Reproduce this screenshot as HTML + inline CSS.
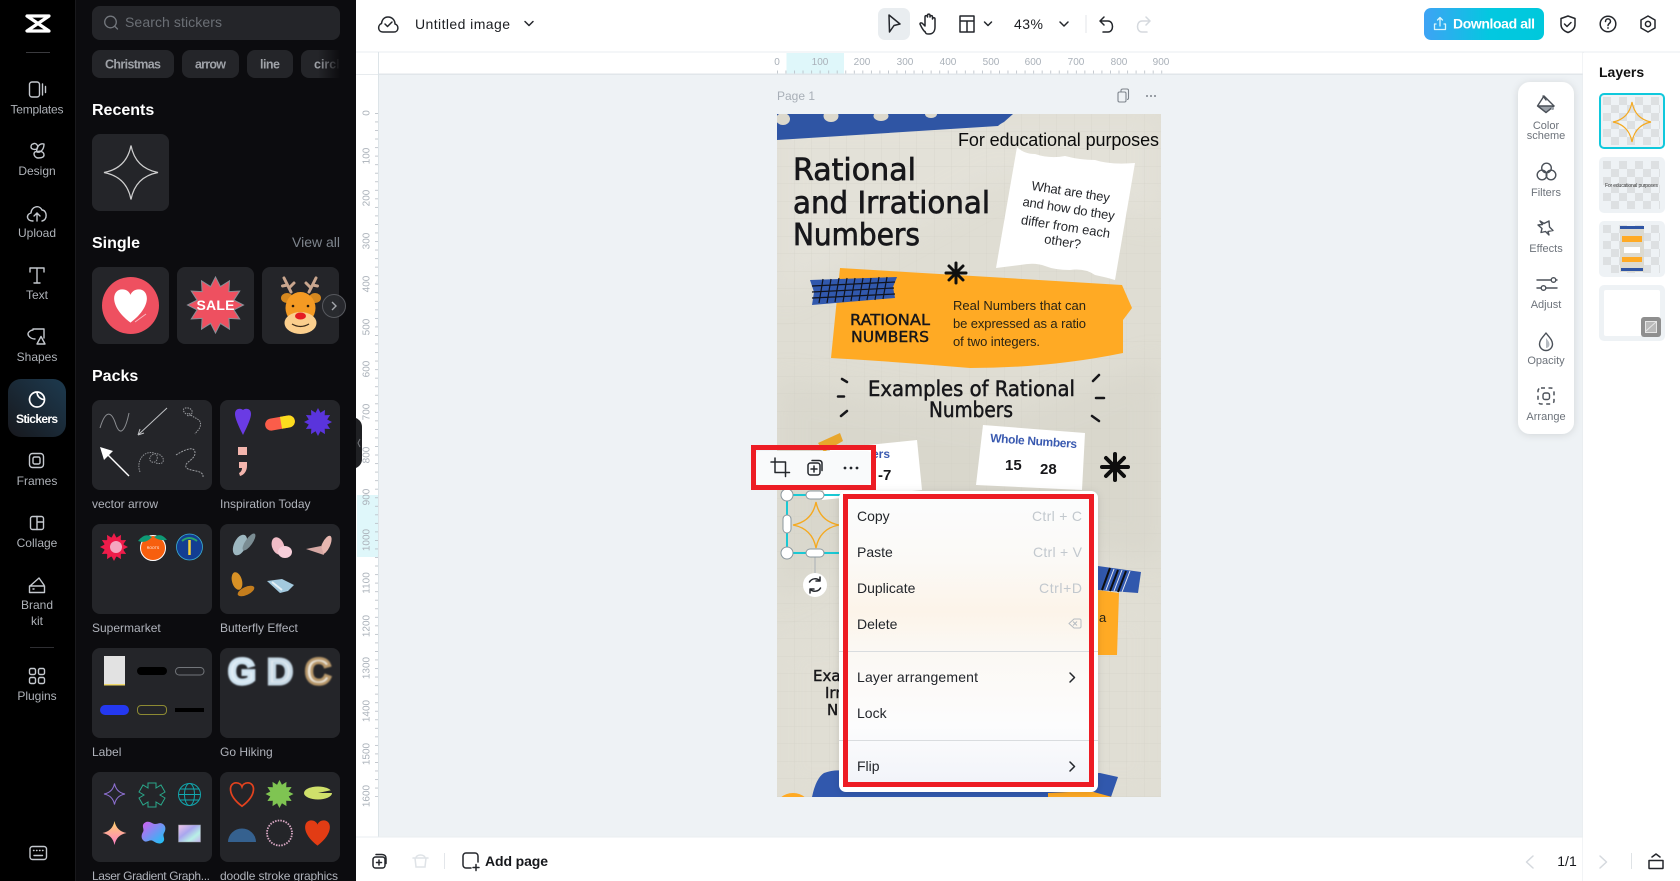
<!DOCTYPE html>
<html lang="en"><head><meta charset="utf-8"><title>Untitled image</title>
<style>
html,body{margin:0;padding:0;width:1680px;height:881px;overflow:hidden;background:#fff}
svg{display:block;position:absolute;left:0;top:0}
text{font-family:"Liberation Sans","DejaVu Sans",sans-serif}
.rl{font-size:12px;fill:#aeb2b8;text-anchor:middle}
.h{font-size:16px;font-weight:700;fill:#fff}
.p{font-size:12px;fill:#b0b3bb}
.c{font-size:12.5px;font-weight:700;fill:#9fa2a8}
.ru{font-size:10px;fill:#aab1b9;text-anchor:middle}
.tl{font-size:11px;fill:#6d737b;text-anchor:middle}
.m{font-size:14px;fill:#23262b}
.s{font-size:14px;fill:#c2c8ce;text-anchor:end}
.hw{font-family:"DejaVu Sans",sans-serif;fill:#17171a;stroke:#17171a;stroke-width:.7}
.ic{fill:none;stroke:#c4c8ce;stroke-width:1.4;stroke-linecap:round;stroke-linejoin:round}
.ti{fill:none;stroke:#24272c;stroke-width:1.5;stroke-linecap:round;stroke-linejoin:round}
.tg{fill:none;stroke:#4b5159;stroke-width:1.4;stroke-linecap:round;stroke-linejoin:round}
.t{fill:#242529}
</style></head><body>
<svg width="1680" height="881" viewBox="0 0 1680 881" xmlns="http://www.w3.org/2000/svg">
<defs>
<path id="star" d="M0-10Q1.6-1.6 10 0Q1.6 1.6 0 10Q-1.6 1.6-10 0Q-1.6-1.6 0-10Z"/>
<path id="heart" d="M0 9C-12 0-10-9-4.5-9C-2-9-.5-7.5 0-6C.5-7.5 2-9 4.5-9C10-9 12 0 0 9Z"/>
<polygon id="burst" points="28,0 18.4,4.9 24.2,14 13.4,13.4 14,24.2 4.9,18.4 0,28 -4.9,18.4 -14,24.2 -13.4,13.4 -24.2,14 -18.4,4.9 -28,0 -18.4,-4.9 -24.2,-14 -13.4,-13.4 -14,-24.2 -4.9,-18.4 0,-28 4.9,-18.4 14,-24.2 13.4,-13.4 24.2,-14 18.4,-4.9"/>
<pattern id="gridp" x="777" y="114" width="17.5" height="17.5" patternUnits="userSpaceOnUse"><path d="M17.5 0V17.5H0" fill="none" stroke="#d0cec4" stroke-width=".5"/></pattern>
<pattern id="rh" x="777" y="0" width="8.54" height="881" patternUnits="userSpaceOnUse"><rect x="0" y="70.5" width=".8" height="3" fill="#b6bcc4"/></pattern>
<pattern id="rv" x="0" y="113" width="881" height="8.54" patternUnits="userSpaceOnUse"><rect x="375" y="0" width="3" height=".8" fill="#b6bcc4"/></pattern>
<pattern id="chk" x="1603" y="97" width="16" height="16" patternUnits="userSpaceOnUse"><rect width="16" height="16" fill="#eef2f5"/><rect width="8" height="8" fill="#dde0e2"/><rect x="8" y="8" width="8" height="8" fill="#dde0e2"/></pattern>
<linearGradient id="dl" x1="0" x2="1"><stop offset="0" stop-color="#3ea3f4"/><stop offset=".55" stop-color="#03c8e0"/><stop offset="1" stop-color="#00c8dc"/></linearGradient>
<linearGradient id="act" x1="1" y1="0" x2="0" y2="1"><stop offset="0" stop-color="#1d3a4f"/><stop offset="1" stop-color="#17181d"/></linearGradient>
<linearGradient id="menu" x1="0" y1="0" x2="0" y2="1"><stop offset="0" stop-color="#fbfcfd"/><stop offset=".22" stop-color="#fbf9f6"/><stop offset=".4" stop-color="#fcf4e9"/><stop offset=".52" stop-color="#fbf8f3"/><stop offset=".8" stop-color="#fcfcfd"/><stop offset="1" stop-color="#f2f4f9"/></linearGradient>
<linearGradient id="fade" x1="0" x2="1"><stop offset="0" stop-color="#0c0c0f" stop-opacity="0"/><stop offset="1" stop-color="#0c0c0f"/></linearGradient>
<linearGradient id="gs" x1="0" y1="0" x2="0" y2="1"><stop offset="0" stop-color="#ffd36a"/><stop offset="1" stop-color="#ff7fc8"/></linearGradient>
<linearGradient id="gb" x1="0" y1="0" x2="1" y2="1"><stop offset="0" stop-color="#d85cf0"/><stop offset="1" stop-color="#12c8f5"/></linearGradient>
<linearGradient id="gh" x1="0" y1="0" x2="1" y2="1"><stop offset="0" stop-color="#f2c6e8"/><stop offset=".4" stop-color="#a9a6ee"/><stop offset=".7" stop-color="#b8f0e6"/><stop offset="1" stop-color="#c8b2f0"/></linearGradient>
<filter id="sh" x="-20%" y="-20%" width="140%" height="140%"><feDropShadow dx="0" dy="1" stdDeviation="4" flood-color="#000" flood-opacity=".12"/></filter>
<filter id="bl" x="-20%" y="-20%" width="140%" height="140%"><feGaussianBlur stdDeviation="14"/></filter>
<filter id="bs" x="-20%" y="-20%" width="140%" height="140%"><feGaussianBlur stdDeviation=".7"/></filter>
<clipPath id="pg"><rect x="777" y="114" width="384" height="683"/></clipPath>
<clipPath id="pn"><rect x="76" y="0" width="280" height="881"/></clipPath>
</defs>

<!-- canvas background and bars -->
<rect x="356" y="0" width="1324" height="881" fill="#fff"/>
<rect x="378" y="75" width="1205" height="762" fill="#eef2f5"/>
<rect x="356" y="51.5" width="1324" height="1" fill="#e9edf0"/>
<rect x="378" y="73.5" width="1205" height="1.5" fill="#e1e6ea"/>
<rect x="356" y="74" width="22" height=".8" fill="#e1e6ea"/>
<rect x="378" y="52" width="1" height="785" fill="#dde4e8"/>
<rect x="1582.5" y="52" width="1" height="829" fill="#e6eaed"/>
<rect x="356" y="836.5" width="1324" height="1" fill="#e9edf0"/>
<rect x="1583" y="53" width="97" height="828" fill="#fff"/>

<!-- rulers -->
<rect x="786.5" y="53" width="57.5" height="20.5" fill="#dff7fa"/>
<rect x="357" y="495" width="21" height="62" fill="#dff7fa"/>
<rect x="777" y="52" width="390" height="22" fill="url(#rh)"/>
<rect x="356" y="113" width="22" height="684" fill="url(#rv)"/>
<g class="ru">
<text class="ru" x="777" y="65">0</text><text class="ru" x="820" y="65">100</text><text class="ru" x="862" y="65">200</text><text class="ru" x="905" y="65">300</text><text class="ru" x="948" y="65">400</text><text class="ru" x="991" y="65">500</text><text class="ru" x="1033" y="65">600</text><text class="ru" x="1076" y="65">700</text><text class="ru" x="1119" y="65">800</text><text class="ru" x="1161" y="65">900</text>
<text class="ru" transform="translate(369.500 113) rotate(-90)">0</text><text class="ru" transform="translate(369.500 156) rotate(-90)">100</text><text class="ru" transform="translate(369.500 198) rotate(-90)">200</text><text class="ru" transform="translate(369.500 241) rotate(-90)">300</text><text class="ru" transform="translate(369.500 284) rotate(-90)">400</text><text class="ru" transform="translate(369.500 327) rotate(-90)">500</text><text class="ru" transform="translate(369.500 369) rotate(-90)">600</text><text class="ru" transform="translate(369.500 412) rotate(-90)">700</text><text class="ru" transform="translate(369.500 455) rotate(-90)">800</text><text class="ru" transform="translate(369.500 497) rotate(-90)">900</text><text class="ru" transform="translate(369.500 540) rotate(-90)">1000</text><text class="ru" transform="translate(369.500 583) rotate(-90)">1100</text><text class="ru" transform="translate(369.500 626) rotate(-90)">1200</text><text class="ru" transform="translate(369.500 668) rotate(-90)">1300</text><text class="ru" transform="translate(369.500 711) rotate(-90)">1400</text><text class="ru" transform="translate(369.500 754) rotate(-90)">1500</text><text class="ru" transform="translate(369.500 796) rotate(-90)">1600</text>
</g>

<!-- top bar -->
<g class="ti"><path d="M383 32h11c5 0 5-7 1-8c0-4-3-7-7-7s-6 3-6.500 6.500c-4 1.500-4 8.500 1.500 8.500Z"/><path d="M385 24l2.500 2.500l4.500-4.500"/></g>
<text x="415" y="29" font-size="14" fill="#1c1e22" textLength="95">Untitled image</text>
<path class="ti" d="M525 21.500l4 4l4-4"/>
<rect x="878" y="8" width="32" height="32" rx="7" fill="#e9edf0"/>
<path class="ti" d="M889 15l11 9l-6 1.500l-4.500 6.500Z"/>
<path class="ti" d="M925 32c-3-3-4-6-5-8c0-1.500 2-1.500 3 0l2 2v-9c0-1.800 2.500-1.800 2.500 0v-1.500c0-1.800 2.500-1.800 2.500 0v1.500c0-1.800 2.500-1.800 2.500 0v2c0-1.600 2.500-1.600 2.500 0v8c0 4-2 7-6 7s-3-1-4-2.500Z"/>
<path class="ti" d="M960 16h14v16h-14ZM960 21h14M967 21v11"/>
<path class="ti" d="M984.500 22l3.500 3.500l3.500-3.500"/>
<text x="1014" y="29" font-size="14" fill="#1c1e22" textLength="29">43%</text>
<path class="ti" d="M1060 22l4 4l4-4"/>
<rect x="1085.500" y="15" width="1" height="18" fill="#e3e6ea"/>
<path class="ti" d="M1104 17l-4 4l4 4M1100 21h8c6 0 6 11 0 11h-5"/>
<path d="M1146 17l4 4l-4 4M1150 21h-8c-6 0-6 11 0 11h5" fill="none" stroke="#d5d9de" stroke-width="1.500" stroke-linecap="round" stroke-linejoin="round"/>
<rect x="1424" y="8" width="120" height="32" rx="7" fill="url(#dl)"/>
<g fill="none" stroke="#d8f4fb" stroke-width="1.300" stroke-linecap="round" stroke-linejoin="round"><path d="M1436 24h-1.500v5.500h11V24H1444M1440 26v-8M1437.500 20l2.500-2.500l2.500 2.500"/></g>
<text x="1453" y="28.500" font-size="14" font-weight="700" fill="#fff" textLength="82">Download all</text>
<path class="ti" d="M1568 16l7 2.500v6c0 4-3 6.500-7 8c-4-1.500-7-4-7-8v-6Z M1564.500 24l2.500 2.500l4-4"/>
<circle class="ti" cx="1608" cy="24" r="7.800"/>
<path class="ti" d="M1605.500 21.500c0-3.500 5-3.500 5 0c0 2-2.500 2-2.500 4"/><circle cx="1608" cy="28" r=".9" fill="#24272c"/>
<path class="ti" d="M1648 16l7 4v8l-7 4l-7-4v-8Z"/><circle class="ti" cx="1648" cy="24" r="2.600"/>

<!-- Poster -->
<text x="777" y="100" font-size="12" fill="#a8afb7">Page 1</text>
<g fill="none" stroke="#7d848c" stroke-width="1.100"><rect x="1118" y="92" width="8" height="10" rx="1.500"/><path d="M1121 92v-1.500c0-1 1-1.500 2-1.500h4c1 0 1.500.5 1.500 1.500v7.500c0 1-.5 1.500-1.500 1.500"/></g>
<g fill="#7d848c"><circle cx="1147" cy="96" r="1"/><circle cx="1151" cy="96" r="1"/><circle cx="1155" cy="96" r="1"/></g>

<g clip-path="url(#pg)">
<rect x="777" y="114" width="384" height="683" fill="#dfddd3"/>
<polygon points="777,114 1161,114 1161,220 1000,180 777,300" fill="#e6e4dc" opacity=".6" filter="url(#bl)"/>
<polygon points="777,380 1000,420 1161,360 1161,560 900,520 777,600" fill="#d6d4c9" opacity=".6" filter="url(#bl)"/>
<polygon points="777,640 1161,600 1161,797 777,797" fill="#e2e0d6" opacity=".6" filter="url(#bl)"/>
<rect x="777" y="114" width="384" height="683" fill="url(#gridp)"/>
<!-- blue tape top -->
<path d="M777 114H1013L1004 122Q1000 124 998 126L777 140Z" fill="#2f55a4"/>
<g fill="#dcd9cd"><ellipse cx="783" cy="119" rx="7" ry="6"/><ellipse cx="831" cy="116" rx="7.500" ry="6"/><ellipse cx="881" cy="116" rx="7.500" ry="5"/><ellipse cx="931" cy="114" rx="6" ry="4"/></g>
<text x="958" y="146" font-size="18" fill="#0b0b0b" textLength="201">For educational purposes</text>
<text class="hw" x="793" y="180" font-size="30" textLength="123" lengthAdjust="spacingAndGlyphs">Rational</text>
<text class="hw" x="793" y="213" font-size="30" textLength="197" lengthAdjust="spacingAndGlyphs">and Irrational</text>
<text class="hw" x="793" y="245" font-size="30" textLength="127" lengthAdjust="spacingAndGlyphs">Numbers</text>
<!-- note -->
<path d="M1017 147Q1024 154 1035 154Q1050 159 1065 156Q1080 160 1095 160Q1110 165 1135 163L1115 280Q1105 277 1095 275Q1085 268 1070 270Q1055 270 1045 266Q1035 262 1020 265L996 268Z" fill="#fff"/>
<g font-size="13" fill="#25272b" text-anchor="middle">
<text transform="translate(1070 196) rotate(9)" textLength="79">What are they</text>
<text transform="translate(1068 213) rotate(9)" textLength="93">and how do they</text>
<text transform="translate(1065 231) rotate(9)" textLength="90">differ from each</text>
<text transform="translate(1062 246) rotate(9)">other?</text>
</g>
<!-- orange -->
<path d="M840 268L1122 285L1132 308L1123 320L1123 353Q1050 368 970 368Q900 362 831 358Z" fill="#ffaa24"/>
<g stroke="#0f0f0f" stroke-width="3" stroke-linecap="round"><path d="M956 263v20M946 273h20M949 266l14 14M963 266l-14 14"/></g>
<polygon points="810,280 897,277 893,287 895,298 812,305 814,292" fill="#3158ad"/>
<g stroke="#10131d" stroke-width="1.200"><path d="M812 286L895 282M812 292L894 288M812 298L895 294M823 279L819 303M831 279L827 303M839 278L835 302M847 278L843 302M855 278L851 301M863 278L859 301M871 278L867 300M879 277L875 300M887 277L883 299"/></g>
<g font-size="15"><text class="hw" x="850" y="325" font-size="15" style="stroke-width:.4" textLength="80" lengthAdjust="spacingAndGlyphs">RATIONAL</text><text class="hw" x="851" y="342" font-size="15" style="stroke-width:.4" textLength="78" lengthAdjust="spacingAndGlyphs">NUMBERS</text></g>
<g font-size="13" fill="#2a2414"><text x="953" y="310" textLength="133">Real Numbers that can</text><text x="953" y="328" textLength="133">be expressed as a ratio</text><text x="953" y="346" textLength="87">of two integers.</text></g>
<g stroke="#17171a" stroke-width="2.500" stroke-linecap="round"><path d="M842 379l5 3M838 396.500h6M841 416l6-5M1093 381l6-6M1096 398h8M1092 416l7 5"/></g>
<text class="hw" x="868" y="396" font-size="21" style="stroke-width:.5" textLength="207" lengthAdjust="spacingAndGlyphs">Examples of Rational</text>
<text class="hw" x="929" y="417" font-size="21" style="stroke-width:.5" textLength="84" lengthAdjust="spacingAndGlyphs">Numbers</text>
<!-- cards -->
<polygon points="818,443 840,433 843,441 824,452" fill="#e8a62c"/>
<polygon points="830,449 917,440 922,490 822,500" fill="#fff"/>
<text x="872" y="458" font-size="12" font-weight="700" fill="#3a5ab0">ers</text>
<text x="878" y="480" font-size="15" font-weight="700" fill="#17171a">-7</text>
<polygon points="983,425 1085,433 1082,490 976,485" fill="#fff"/>
<text transform="translate(990 442) rotate(4)" font-size="12" font-weight="700" fill="#3a5ab0" textLength="87">Whole Numbers</text>
<text x="1005" y="470" font-size="15" font-weight="700" fill="#17171a">15</text>
<text x="1040" y="474" font-size="15" font-weight="700" fill="#17171a">28</text>
<g stroke="#0e0e0e" stroke-width="4" stroke-linecap="round"><path d="M1115 454v26M1102 467h26M1106 458l18 18M1124 458l-18 18"/></g>
<!-- lower -->
<polygon points="1098,590 1119,593 1117,655 1098,655" fill="#ffaa24"/>
<text x="1099" y="622" font-size="13" fill="#2a2414">a</text>
<polygon points="1098,566 1141,572 1138,593 1098,590" fill="#3158ad"/>
<g stroke="#0e0e0e" stroke-width="2"><path d="M1102 590l8-22M1110 591l8-21M1118 592l8-21"/></g>
<g stroke="#e4e6ee" stroke-width="1"><path d="M1106 590l8-21M1114 591l8-21M1122 592l8-21"/></g>
<text class="hw" x="813" y="681" font-size="15" style="stroke-width:.4">Exa</text><text class="hw" x="825" y="698" font-size="15" style="stroke-width:.4">Irr</text><text class="hw" x="827" y="715" font-size="15" style="stroke-width:.4">N</text>
<path d="M812 797Q816 778 824 773Q835 769 845 771L1100 773L1118 777L1111 797Z" fill="#3158ad"/>
<polygon points="1048,793 1090,791 1112,797 1048,797" fill="#ffaa24"/>
<ellipse cx="793" cy="808" rx="17" ry="15" fill="#ffaa24"/>
</g>

<!-- selection -->
<rect x="787" y="495" width="57" height="58" fill="none" stroke="#19c9d4" stroke-width="2"/>
<use href="#star" transform="translate(816 525) scale(2.300)" fill="none" stroke="#f5a91f" stroke-width=".6"/>
<path d="M815 553V573" stroke="#a9b0b6" stroke-width="1"/>
<g fill="#fff" stroke="#8b979e" stroke-width="1"><circle cx="787" cy="495" r="6"/><circle cx="787" cy="553" r="6"/><rect x="806" y="491" width="18" height="8" rx="4"/><rect x="806" y="549" width="18" height="8" rx="4"/><rect x="783" y="515" width="8" height="18" rx="4"/></g>
<circle cx="815" cy="585" r="12" fill="#fff"/>
<path class="ti" d="M820 581a6.500 6.500 0 0 0-10.500 1M810 589a6.500 6.500 0 0 0 10.500-1M820 577v4h-4M810 593v-4h4" stroke-width="1.400"/>

<!-- toolbar -->
<rect x="756" y="451" width="115" height="34" rx="4" fill="#f9fafb"/>
<g class="ti" stroke-width="1.700"><path d="M771 462h14.500v14.500M775 458v14.500h14.500"/></g>
<rect x="808" y="463" width="12" height="12" rx="2.500" class="ti"/><path class="ti" d="M812 460.500h7c2 0 3 1 3 3v7M814 466v6M811 469h6"/>
<g fill="#23262b"><circle cx="845" cy="468" r="1.400"/><circle cx="851" cy="468" r="1.400"/><circle cx="857" cy="468" r="1.400"/></g>
<rect x="753.500" y="447.500" width="120" height="40" fill="none" stroke="#ed1c24" stroke-width="5"/>

<!-- context menu -->
<rect x="839" y="491" width="259" height="301" rx="7" fill="#fff" filter="url(#sh)"/>
<rect x="848" y="499" width="241" height="283" fill="url(#menu)"/>
<rect x="839" y="651" width="259" height="1" fill="#d9dcdf"/>
<rect x="839" y="740" width="259" height="1" fill="#d9dcdf"/>
<text class="m" x="857" y="521">Copy</text><text class="s" x="1082" y="521" textLength="50">Ctrl + C</text>
<text class="m" x="857" y="557">Paste</text><text class="s" x="1082" y="557" textLength="49">Ctrl + V</text>
<text class="m" x="857" y="593">Duplicate</text><text class="s" x="1082" y="593" textLength="43">Ctrl+D</text>
<text class="m" x="857" y="629">Delete</text>
<path d="M1074 619h5.500a1.500 1.500 0 0 1 1.500 1.500v6a1.500 1.500 0 0 1-1.500 1.500H1074l-5-4.500ZM1073 621.500l4 4M1077 621.500l-4 4" fill="none" stroke="#b6bcc2" stroke-width="1"/>
<text class="m" x="857" y="682" textLength="121">Layer arrangement</text>
<path d="M1070 673l4.500 4.500l-4.500 4.500" class="ti"/>
<text class="m" x="857" y="718">Lock</text>
<text class="m" x="857" y="771">Flip</text>
<path d="M1070 762l4.500 4.500l-4.500 4.500" class="ti"/>
<rect x="845.500" y="496.500" width="246" height="288" fill="none" stroke="#ed1c24" stroke-width="5"/>

<!-- right tools -->
<rect x="1518" y="82" width="56" height="352" rx="12" fill="#fff" filter="url(#sh)"/>
<g class="tg"><path d="M1544 96l10 10l-8 6.500l-8.500-6.500Z"/><path d="M1538 106h16l-8 6.500Z" fill="#9aa0a7"/><path d="M1543 96l3 4"/></g>
<circle cx="1552.500" cy="108.500" r="1.500" fill="#9aa0a7"/>
<text class="tl" x="1546" y="129">Color</text><text class="tl" x="1546" y="139">scheme</text>
<g class="tg"><circle cx="1546.500" cy="168" r="4.800"/><circle cx="1542" cy="175" r="4.800"/><circle cx="1551" cy="175" r="4.800"/></g>
<text class="tl" x="1546" y="196">Filters</text>
<path class="tg" d="M1540 221l4 2.500l5-2.500l.5 6l3.500 3.500l-5 1l1 3.500l-3.500-3.500l-4.500 1l1-4l-4-3.500l4.500-.5Z"/>
<text class="tl" x="1546" y="252">Effects</text>
<g class="tg"><path d="M1537 280h14M1556 280h1M1537 288h4M1546 288h11"/><circle cx="1553.500" cy="280" r="2.300"/><circle cx="1543.500" cy="288" r="2.300"/></g>
<text class="tl" x="1546" y="308">Adjust</text>
<path class="tg" d="M1546 333c3 4 6.500 7 6.500 11a6.500 6.500 0 0 1-13 0c0-4 3.500-7 6.500-11Z"/><path d="M1546 338c2 2.500 3.500 4 3.500 6.500a3.500 3.500 0 0 1-3.500 3.500Z" fill="#b6bbc1"/>
<text class="tl" x="1546" y="364">Opacity</text>
<rect x="1538" y="388" width="16" height="16" rx="3" fill="none" stroke="#4b5159" stroke-width="1.500" stroke-dasharray="4 3.500"/>
<rect x="1543" y="393" width="6.500" height="6.500" rx="2" class="tg"/>
<text class="tl" x="1546" y="420">Arrange</text>

<!-- layers -->
<text x="1599" y="77" font-size="14" font-weight="700" fill="#111">Layers</text>
<rect x="1599" y="93" width="66" height="56" rx="5" fill="#eef2f5"/>
<rect x="1603" y="97" width="57" height="48" fill="url(#chk)"/>
<rect x="1600" y="94" width="64" height="54" rx="4" fill="none" stroke="#0fc8dc" stroke-width="2"/>
<use href="#star" transform="translate(1632 122) scale(1.900,2)" fill="none" stroke="#f5a91f" stroke-width=".6"/>
<rect x="1599" y="157" width="66" height="56" rx="5" fill="#eef2f5"/>
<rect x="1603" y="161" width="57" height="48" fill="url(#chk)"/>
<text x="1605" y="187" font-size="5" fill="#333" textLength="53">For educational purposes</text>
<rect x="1599" y="221" width="66" height="56" rx="5" fill="#eef2f5"/>
<rect x="1603" y="225" width="57" height="48" fill="url(#chk)"/>
<rect x="1620" y="226" width="24" height="46" fill="#dcdad0"/>
<rect x="1620" y="226" width="24" height="3" fill="#2f55a4"/>
<rect x="1622" y="236" width="20" height="6" fill="#ffaa24"/><rect x="1624" y="247" width="16" height="6" fill="#fff"/><rect x="1622" y="257" width="20" height="5" fill="#ffaa24"/><rect x="1621" y="268" width="22" height="3" fill="#2f55a4"/>
<rect x="1599" y="285" width="66" height="56" rx="5" fill="#eef2f5"/>
<rect x="1604" y="290" width="56" height="46" rx="2" fill="#fff"/>
<rect x="1641" y="317" width="20" height="20" rx="3" fill="#8f8f8f"/>
<rect x="1645.500" y="321.500" width="11" height="11" fill="#b9b9b9" stroke="#e6e6e6"/><path d="M1646 331l10-9" stroke="#e6e6e6"/>

<!-- bottom bar -->
<rect x="373" y="857" width="12" height="11" rx="2.500" class="ti"/><path class="ti" d="M376 854.500h6c2.500 0 4 1.500 4 4v5M379 860v5M376.500 862.500h5"/>
<path d="M413 858h15M416 858c0-4 9-4 9 0M415 858l1 9h9l1-9" fill="none" stroke="#dfe3e7" stroke-width="1.500" stroke-linecap="round"/>
<rect x="444" y="853" width="1" height="16" fill="#e3e6ea"/>
<path class="ti" d="M471 868h-5a3 3 0 0 1-3-3v-9a3 3 0 0 1 3-3h9a3 3 0 0 1 3 3v6M473 867.500h6M476 864.500v6"/>
<text x="485" y="866" font-size="14" font-weight="700" fill="#16181c" textLength="63">Add page</text>
<path d="M1533 856l-6.500 6l6.500 6M1600 856l6.500 6l-6.500 6" fill="none" stroke="#d5d9de" stroke-width="1.500" stroke-linecap="round" stroke-linejoin="round"/>
<text x="1567" y="866" font-size="14" fill="#16181c" text-anchor="middle">1/1</text>
<rect x="1631" y="853" width="1" height="16" fill="#dfe3e6"/>
<path class="ti" d="M1649 860.500h14v7.500a.5.500 0 0 1-.5.500h-13a.5.500 0 0 1-.5-.500ZM1652 857l4-3l4 3" stroke-width="1.700"/>

<!-- left rail -->
<rect x="0" y="0" width="76" height="881" fill="#000"/>
<rect x="76" y="0" width="280" height="881" fill="#0c0c0f"/>
<rect x="75" y="0" width="1" height="881" fill="#19191c"/>
<g fill="none" stroke="#fff" stroke-width="3.200" stroke-linejoin="round" stroke-linecap="round"><path d="M27 16H49L27 31H49Z"/></g>
<rect x="26" y="52" width="24" height="1" fill="#3a3a3e"/>
<g class="ic"><rect x="29.500" y="82" width="10" height="15" rx="2.500"/><path d="M42.500 84v11M45.500 86.500v6"/></g>
<text class="rl" x="37" y="113.500" textLength="53">Templates</text>
<g class="ic"><path d="M33 144c3-2 6 2 4 5c-3 1-6 0-6-2s1-3 2-3ZM44 144c-5-1-8 4-7 8c3 1 7-2 7-8ZM37 152c3-2 7 0 7 3s-4 3-6 3s-4-2-4-4s2-3 3-2Z"/></g>
<text class="rl" x="37" y="175">Design</text>
<g class="ic"><path d="M33 221c-7 0-7-7-2-8c0-6 8-9 11-3c5 0 6 10 0 11M37 221v-8M34 216l3-3l3 3"/></g>
<text class="rl" x="37" y="237">Upload</text>
<g class="ic"><path d="M30 272v-4h14v4M37 268v15M34 283h6"/></g>
<text class="rl" x="37" y="299">Text</text>
<g class="ic"><path d="M35 339c-4 0-7-3-7-5s3-4 5-4M33 329h11v9M37 344h8l-4-7.500Z"/></g>
<text class="rl" x="37" y="361">Shapes</text>
<rect x="8" y="379" width="58" height="58" rx="13" fill="url(#act)"/>
<path d="M37 392a7.500 7.500 0 1 0 7.500 7.500c-4 0-7.500-3-7.500-7.500ZM37 392c4 0 7.500 3.500 7.500 7.500" fill="none" stroke="#fff" stroke-width="1.700" stroke-linejoin="round"/>
<text class="rl" x="37" y="423" style="fill:#fff;font-weight:700" textLength="42">Stickers</text>
<g class="ic"><rect x="29.500" y="453.500" width="14" height="14" rx="3"/><rect x="33" y="457" width="7" height="7" rx="1.500"/></g>
<text class="rl" x="37" y="485">Frames</text>
<g class="ic"><rect x="30.500" y="516.500" width="13" height="13" rx="2"/><path d="M37 516.500v13M37 522h6.500"/></g>
<text class="rl" x="37" y="547">Collage</text>
<g class="ic"><path d="M30 586l9-8l5 7M29.500 586h15v6.500h-15ZM33 589h1"/></g>
<text class="rl" x="37" y="609">Brand</text><text class="rl" x="37" y="625">kit</text>
<rect x="30" y="647" width="24" height="1" fill="#2e2e32"/>
<g class="ic"><rect x="29.500" y="668.500" width="6" height="6" rx="1.500"/><rect x="38.500" y="668.500" width="6" height="6" rx="1.500"/><rect x="29.500" y="677.500" width="6" height="6" rx="1.500"/><rect x="38.500" y="677.500" width="6" height="6" rx="1.500"/></g>
<text class="rl" x="37" y="700">Plugins</text>
<g class="ic"><rect x="30" y="846.500" width="16.500" height="13" rx="2.500"/><path d="M33.500 850.500h.5M36.500 850.500h.5M39.500 850.500h.5M42.500 850.500h.5M34 855.500h8.500"/></g>

<!-- panel -->
<g clip-path="url(#pn)">
<rect x="92" y="6" width="248" height="34" rx="8" fill="#242529"/>
<circle cx="110.500" cy="22" r="5.800" fill="none" stroke="#73777d" stroke-width="1.300"/><path d="M115 26.500l2.500 2.500" stroke="#73777d" stroke-width="1.300" stroke-linecap="round"/>
<text x="125" y="27" font-size="14" fill="#6b6f75" textLength="97">Search stickers</text>
<rect x="92" y="50" width="82" height="28" rx="8" class="t"/><text class="c" x="105" y="68.500" textLength="56">Christmas</text>
<rect x="182" y="50" width="57" height="28" rx="8" class="t"/><text class="c" x="195" y="68.500" textLength="31">arrow</text>
<rect x="247" y="50" width="46" height="28" rx="8" class="t"/><text class="c" x="260" y="68.500" textLength="20">line</text>
<rect x="301" y="50" width="50" height="28" rx="8" class="t"/><text class="c" x="314" y="68.500">circle</text>
<rect x="318" y="50" width="22" height="28" fill="url(#fade)"/>
<rect x="340" y="48" width="16" height="32" fill="#0c0c0f"/>
<text class="h" x="92" y="115">Recents</text>
<rect x="92" y="134" width="77" height="77" rx="8" class="t"/>
<use href="#star" transform="translate(131 172.500) scale(2.700)" fill="none" stroke="#cfcfcf" stroke-width=".45"/>
<text class="h" x="92" y="248">Single</text>
<text x="340" y="247" font-size="14" fill="#7e858d" text-anchor="end">View all</text>
<rect x="92" y="267" width="77" height="77" rx="8" class="t"/>
<rect x="177" y="267" width="77" height="77" rx="8" class="t"/>
<rect x="262" y="267" width="77" height="77" rx="8" class="t"/>
<circle cx="130.500" cy="305.500" r="28.500" fill="#ee5060"/>
<use href="#heart" transform="translate(130.500 306) scale(1.850)" fill="#fff"/>
<path d="M135 322l11-8" stroke="#f7b9c0" stroke-width="1"/>
<use href="#burst" transform="translate(215.500 305)" fill="#ee5060" stroke="#8a8f97" stroke-width="1"/>
<text x="215.500" y="310" font-size="14" font-weight="700" fill="#fff" text-anchor="middle" textLength="38">SALE</text>
<g fill="none" stroke="#c9a68e" stroke-width="3" stroke-linecap="round"><path d="M291 292l-7-14M287.500 285l-5 1M289 288l5-5M309 292l7-14M312.500 285l5 1M311 288l-5-5"/></g>
<ellipse cx="287" cy="298" rx="6" ry="5" fill="#d5881f"/><ellipse cx="315" cy="298" rx="6" ry="5" fill="#d5881f"/>
<ellipse cx="300.500" cy="308" rx="15" ry="16" fill="#f49a23"/>
<ellipse cx="300.500" cy="323" rx="16" ry="11" fill="#fbcf8d"/>
<ellipse cx="300.500" cy="316" rx="5.500" ry="3.500" fill="#e51c23"/>
<circle cx="293" cy="306" r="1.300" fill="#2a1a0a"/><circle cx="308" cy="306" r="1.300" fill="#2a1a0a"/>
<path d="M292 324q8.500 5 17 0" fill="none" stroke="#3a2a18" stroke-width="1.300"/>
<circle cx="334" cy="306" r="11.500" fill="#2a2b30" fill-opacity=".92" stroke="#57595e"/>
<path d="M332 302l4 4l-4 4" fill="none" stroke="#a4a7ac" stroke-width="1.400"/>
<text class="h" x="92" y="381">Packs</text>

<rect x="92" y="400" width="120" height="90" rx="8" class="t"/><rect x="220" y="400" width="120" height="90" rx="8" class="t"/>
<text class="p" x="92" y="508">vector arrow</text><text class="p" x="220" y="508">Inspiration Today</text>
<rect x="92" y="524" width="120" height="90" rx="8" class="t"/><rect x="220" y="524" width="120" height="90" rx="8" class="t"/>
<text class="p" x="92" y="632">Supermarket</text><text class="p" x="220" y="632">Butterfly Effect</text>
<rect x="92" y="648" width="120" height="90" rx="8" class="t"/><rect x="220" y="648" width="120" height="90" rx="8" class="t"/>
<text class="p" x="92" y="756">Label</text><text class="p" x="220" y="756">Go Hiking</text>
<rect x="92" y="772" width="120" height="90" rx="8" class="t"/><rect x="220" y="772" width="120" height="90" rx="8" class="t"/>
<text class="p" x="92" y="880" textLength="118">Laser Gradient Graph...</text><text class="p" x="220" y="880" textLength="118">doodle stroke graphics</text>

<!-- tile 1 -->
<path d="M100 428C106 408 112 412 116 425C120 436 125 432 129 413" fill="none" stroke="#8b8d91" stroke-width="1"/>
<path d="M167 408L138 435M138 435l2-6M138 435l6-2" fill="none" stroke="#bfc1c4" stroke-width="1"/>
<path d="M186 414c-9-8 8-8 6-1c-2 5-8 2-3 0c4 6 14 5 11 14c-1 3-4 5-5 7" fill="none" stroke="#9a9ca0" stroke-width="1" stroke-dasharray="1.500 1"/>
<path d="M129 476L105 452" stroke="#fff" stroke-width="1.400"/><polygon points="100,447 113,451 104,460" fill="#fff"/>
<path d="M140 472c-4-10 3-22 14-19c6 2 3 11-2 9s-1-10 6-8s8 12-2 9" fill="none" stroke="#8f9195" stroke-width="1" stroke-dasharray="1.500 1"/>
<path d="M176 455c8-5 19-10 19-2c0 7-11 9-9 14s18 2 17 10" fill="none" stroke="#9a9ca0" stroke-width="1" stroke-dasharray="2 1"/>
<!-- tile 2 -->
<path d="M243 435C238 425 235 418 235 414C235 408 241 408 243 410C245 408 251 408 251 414C251 418 248 425 243 435Z" fill="#6a3be4"/>
<g transform="rotate(-10 280 423)"><rect x="265" y="417" width="30" height="12" rx="6" fill="#fb5d4a"/><path d="M281 417h8a6 6 0 0 1 0 12h-8Z" fill="#fbdc1e"/></g>
<circle cx="318" cy="422" r="8" fill="#5a34dc"/><use href="#burst" transform="translate(318 422) scale(.5)" fill="#5a34dc"/>
<rect x="238" y="447" width="9" height="8" fill="#f3b5ad"/><path d="M239 462h8v4c0 5-3 9-7 10l-1-3c2-1 3-3 3-5h-3Z" fill="#f3b5ad"/>
<!-- Supermarket -->
<circle cx="114" cy="547" r="10" fill="#ef1c4a"/><use href="#burst" transform="translate(114 547) scale(.5)" fill="#ef1c4a"/><circle cx="116" cy="547" r="6" fill="#f5a6c0"/>
<circle cx="153" cy="548" r="12.500" fill="#f75f0e" stroke="#fff" stroke-width="1"/><path d="M138 541q7-9 14-4q-6 7-14 4ZM154 537q7-5 13 3q-8 1-13-3Z" fill="#0f9a76"/>
<text x="153" y="549" font-size="3.500" fill="#fff" text-anchor="middle">ROOTS</text>
<circle cx="189.500" cy="547" r="13" fill="#133e92" stroke="#3bb0d4" stroke-width=".8"/><path d="M189.500 540v15" stroke="#f2d23a" stroke-width="2.500"/><path d="M182 541q7-6 15 0" fill="none" stroke="#2aa36a" stroke-width="2"/>
<!-- Butterfly -->
<g><ellipse cx="240" cy="545" rx="6" ry="11" transform="rotate(25 240 545)" fill="#9db7c0"/><ellipse cx="249" cy="542" rx="3.500" ry="10" transform="rotate(35 249 542)" fill="#7b8d93"/></g>
<g><ellipse cx="278" cy="546" rx="6" ry="9" transform="rotate(-20 278 546)" fill="#f0bcc6"/><ellipse cx="285" cy="552" rx="7" ry="6" fill="#f7cfda"/></g>
<g><ellipse cx="326" cy="545" rx="4" ry="10" transform="rotate(25 326 545)" fill="#e7b7b0"/><path d="M306 549l15-3l3 9Z" fill="#d6a8a4"/></g>
<g><ellipse cx="237" cy="581" rx="5" ry="9" transform="rotate(-15 237 581)" fill="#d89125"/><ellipse cx="246" cy="591" rx="9" ry="4" transform="rotate(-25 246 591)" fill="#c47d1d"/></g>
<g><path d="M267 581l15-2l12 6l-6 6l-8 2Z" fill="#a3c9de"/><path d="M272 582l10 8" stroke="#e4f0f6" stroke-width="2"/></g>
<!-- Label -->
<rect x="104" y="656" width="21" height="29" fill="#e2e2e2"/><rect x="104" y="684" width="21" height="1.500" fill="#f0d96b"/>
<rect x="137" y="667" width="30" height="8" rx="4" fill="#000"/>
<rect x="175.500" y="667.500" width="28.500" height="7.500" rx="3.700" fill="none" stroke="#72757a"/>
<rect x="100" y="705" width="29" height="10" rx="5" fill="#2438f0"/>
<rect x="137.500" y="705.500" width="29" height="9" rx="3.500" fill="none" stroke="#8d8a33"/>
<rect x="175" y="708" width="29" height="4" fill="#000"/>
<!-- Go Hiking -->
<g font-size="36" font-weight="700" text-anchor="middle" stroke-width="3" filter="url(#bs)"><text x="242" y="684" fill="#e3eef6" stroke="#cfe3f0">G</text><text x="280" y="684" fill="#dfe8ee" stroke="#c6d8e4">D</text><text x="318" y="684" fill="#f0ece0" stroke="#b8986a">C</text></g>
<!-- Laser -->
<use href="#star" transform="translate(114.500 794) scale(1.050)" fill="none" stroke="#8c6fcf" stroke-width="1"/>
<path d="M148 783h8v5l5-3l4 7l-5 3l5 3l-4 7l-5-3v5h-8v-5l-5 3l-4-7l5-3l-5-3l4-7l5 3Z" fill="none" stroke="#2aa78a" stroke-width="1"/>
<g fill="none" stroke="#12a6ad" stroke-width="1"><circle cx="189.500" cy="794.500" r="11"/><ellipse cx="189.500" cy="794.500" rx="5" ry="11"/><path d="M178.500 794.500h22M180.500 789h18M180.500 800h18"/></g>
<use href="#star" transform="translate(114.500 833) scale(1.200)" fill="url(#gs)"/>
<path d="M146 822c5-1 6 2 9 2s5-2 8 0s3 6 1 9s2 6-1 9s-7 1-10-1s-6 2-9 0s-3-6-1-9s-3-7 3-10Z" fill="url(#gb)"/>
<rect x="178.500" y="825" width="22" height="17" fill="url(#gh)" stroke="#9a9ea6" stroke-width=".5"/>
<!-- doodle -->
<use href="#heart" transform="translate(242 794.500) scale(1.300)" fill="none" stroke="#e3421e" stroke-width="1.300"/>
<circle cx="279.500" cy="794" r="9" fill="#7fc452"/><use href="#burst" transform="translate(279.500 794) scale(.5)" fill="#7fc452"/>
<ellipse cx="318" cy="793" rx="14" ry="6.500" fill="#cfe06a"/><path d="M318 793l14-3v3Z" fill="#242529"/>
<path d="M228 842a14 13.500 0 0 1 28 0Z" fill="#35618f"/>
<circle cx="279.500" cy="833" r="12.500" fill="none" stroke="#d9a8c4" stroke-width="1.800" stroke-dasharray="1.500 1.200"/>
<use href="#heart" transform="translate(317.500 833) scale(1.400)" fill="#e23c14"/>
</g>
<!-- collapse handle -->
<path d="M356 418c4 2 6 5 6 9v32c0 4-2 7-6 9Z" fill="#1f2023"/>
<path d="M360 439l-2 4l2 4" stroke="#77797d" fill="none" stroke-width="1"/>
</svg>
</body></html>
